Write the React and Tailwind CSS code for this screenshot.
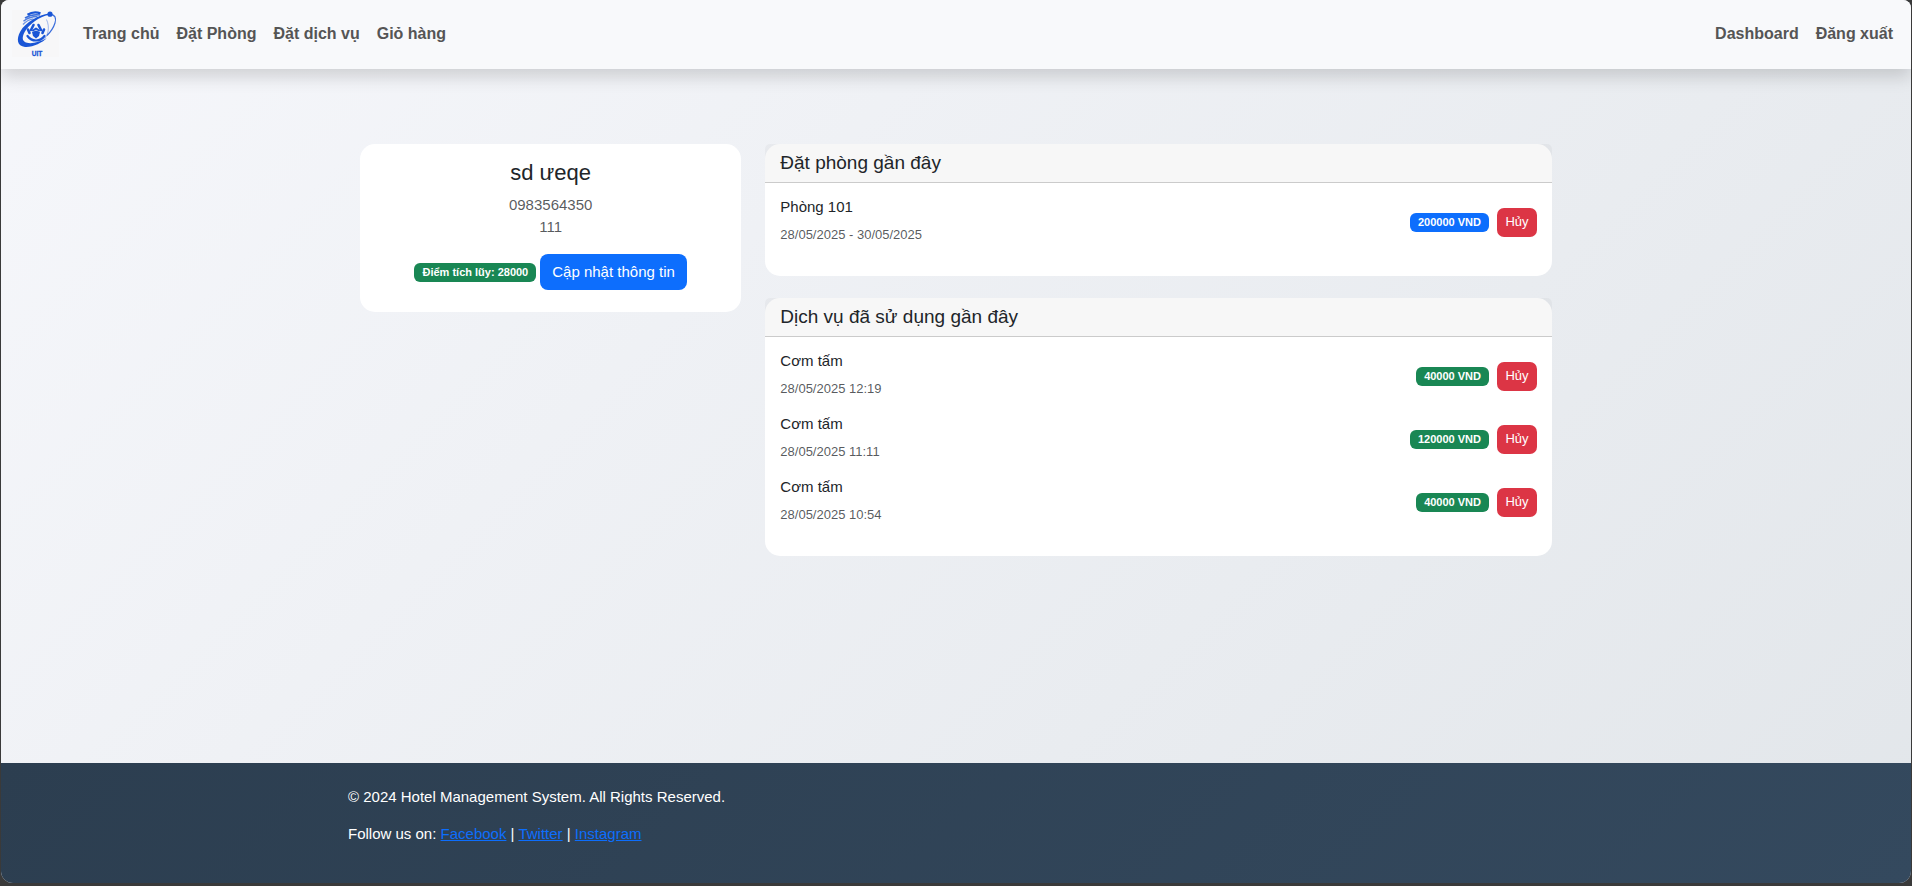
const navLinks = ['Trang chủ', 'Đặt Phòng', 'Đặt dịch vụ', 'Giỏ hàng'];
const accountLinks = ['Dashboard', 'Đăng xuất'];
const socialLinks = ['Facebook', 'Twitter', 'Instagram'];

const rooms = [
  { name: 'Phòng 101', time: '28/05/2025 - 30/05/2025', price: '200000 VND' },
];

const services = [
  { name: 'Cơm tấm', time: '28/05/2025 12:19', price: '40000 VND' },
  { name: 'Cơm tấm', time: '28/05/2025 11:11', price: '120000 VND' },
  { name: 'Cơm tấm', time: '28/05/2025 10:54', price: '40000 VND' },
];

function Logo() {
  return (
    <svg viewBox="0 0 47 47" className="block size-[47px]" role="img" aria-label="UIT">
      <rect width="47" height="47" fill="#f7f7f8" />
      {/* Globe stripes */}
      <g fill="none" stroke="#1a56d6">
        <path d="M15.500 4.800Q21.500 1 28.500 3.400" strokeWidth="2.200" />
        <path d="M13 8Q19.500 3.800 28 5" strokeWidth="1.700" opacity=".85" />
        <path d="M11.500 11.300Q17 6.600 25.500 6.600" strokeWidth="1.500" opacity=".75" />
        <path d="M11 14.500Q15 9.800 21.500 8.800" strokeWidth="1.300" opacity=".6" />
        <path d="M34.500 9.500C38 17 36.500 26 30.500 31" strokeWidth=".8" opacity=".5" />
      </g>
      {/* Orbit ring */}
      <path
        fill="#1a56d6"
        d="M37 3.600C27 4.500 13.500 12.500 8.300 21.500C4.200 29 5 36.300 13 36.900C21 37.400 30 32.800 34.800 28.300C28 32 20 34 15 32.800C10 31.600 9.600 27.500 12.800 21.800C17 14.500 27 6.800 37 4.800Z"
      />
      <path
        d="M38 4.300C43 4.600 44.600 8 43 13C41.600 17.500 38.500 22 35 25.500"
        fill="none"
        stroke="#1a56d6"
        strokeWidth="1.200"
        opacity=".85"
      />
      <circle cx="38" cy="4.200" r="2.600" fill="#1a56d6" />
      {/* Central figure */}
      <g fill="none" stroke="#1a56d6" strokeWidth="2.600" strokeLinecap="round" strokeLinejoin="round">
        <path d="M21.500 15L19 20" />
        <path d="M26.500 15L29 20" />
        <path d="M16 19.500L17.500 23" />
        <path d="M32 19.500L30.500 23" />
        <path d="M21 20.500L24 18.500L27 20.500" strokeWidth="2" />
        <path d="M15.500 26C18 29.500 21 30.500 24 30.500C27 30.500 30 29.500 32.500 26" strokeWidth="2.200" />
      </g>
      <path fill="#1a56d6" d="M20 22L24 20.500L28 22L27 26L24 28.500L21 26Z" />
      <text
        x="25"
        y="45.500"
        textAnchor="middle"
        fontSize="6.500"
        fontWeight="700"
        fill="#1a56d6"
        stroke="#1a56d6"
        strokeWidth=".3"
        fontFamily="Liberation Sans, sans-serif"
      >
        UIT
      </text>
    </svg>
  );
}

function Badge({ className, children }) {
  return (
    <span
      className={`inline-flex h-[19px] items-center rounded-md px-2 text-[11px] leading-none font-bold whitespace-nowrap text-white ${className}`}
    >
      {children}
    </span>
  );
}

function HistoryCard({ title, items, badgeClass }) {
  return (
    <section className="rounded-[15px] bg-white">
      <header className="rounded-t-[5px] border-b border-black/[0.18] bg-black/[0.03] px-[15px] py-2">
        <h2 className="text-[19px] leading-[22px]">{title}</h2>
      </header>
      <ul className="p-[15px]">
        {items.map((item) => (
          <li key={item.time} className="mb-[15px] flex items-center justify-between">
            <div>
              <h3 className="mb-2 text-[15px] leading-[18px]">{item.name}</h3>
              <p className="text-[13px] leading-[22px] text-[#212529]/75">{item.time}</p>
            </div>
            <div className="flex items-center gap-2">
              <Badge className={badgeClass}>{item.price}</Badge>
              <button
                type="button"
                className="h-[29px] min-w-10 rounded-[7px] bg-[#dc3545] px-2 text-[13px] text-white"
              >
                Hủy
              </button>
            </div>
          </li>
        ))}
      </ul>
    </section>
  );
}

export default function App() {
  return (
    <div className="flex min-h-screen flex-col bg-[#3a3a3a] px-px pb-[3px] font-['Liberation_Sans',Arial,sans-serif] text-[15px] leading-[22px] text-[#212529]">
      <div className="flex flex-1 flex-col overflow-hidden rounded-t-lg rounded-b-xl bg-linear-[135deg,#f6f7fb,#e2e6ea]">
        <nav className="flex items-center gap-6 bg-[#f8f9fb] px-[11px] pt-[10px] pb-3 text-base leading-6 font-bold text-[#555] shadow-[0_8px_16px_rgba(0,0,0,0.15)]">
          <a href="#home">
            <Logo />
          </a>
          <div className="flex flex-1 justify-between pr-[7px]">
            <div className="flex gap-[17px]">
              {navLinks.map((label) => (
                <a key={label} href="#nav">{label}</a>
              ))}
            </div>
            <div className="flex gap-[17px]">
              {accountLinks.map((label) => (
                <a key={label} href="#account">{label}</a>
              ))}
            </div>
          </div>
        </nav>

        <main className="mx-auto grid w-full max-w-[1216px] flex-1 grid-cols-12 content-start items-start gap-6 px-3 pt-[75px] pb-12">
          <section className="col-span-4 rounded-[15px] bg-white px-[15px] pt-[15px] pb-[22px] text-center">
            <h1 className="mb-2 text-[22px] leading-[27px]">sd ưeqe</h1>
            <p className="mb-4 text-[#212529]/75">
              0983564350
              <br />
              111
            </p>
            <div className="flex items-center justify-center gap-1">
              <Badge className="bg-[#198754]">Điểm tích lũy: 28000</Badge>
              <button
                type="button"
                className="h-9 rounded-lg bg-[#0d6efd] px-3 text-[15px] text-white"
              >
                Cập nhật thông tin
              </button>
            </div>
          </section>

          <div className="col-span-8 flex flex-col gap-[22px]">
            <HistoryCard title="Đặt phòng gần đây" items={rooms} badgeClass="bg-[#0d6efd]" />
            <HistoryCard title="Dịch vụ đã sử dụng gần đây" items={services} badgeClass="bg-[#198754]" />
          </div>
        </main>

        <footer className="bg-linear-[135deg,#2c3e50,#34495e] pt-[23px] pb-[38px] text-white">
          <div className="mx-auto w-full max-w-[1216px]">
            <p className="mb-[15px]">© 2024 Hotel Management System. All Rights Reserved.</p>
            <p>
              Follow us on:{' '}
              {socialLinks.map((label, index) => (
                <span key={label}>
                  {index > 0 && ' | '}
                  <a href="#social" className="text-[#0d6efd] underline">{label}</a>
                </span>
              ))}
            </p>
          </div>
        </footer>
      </div>
    </div>
  );
}
